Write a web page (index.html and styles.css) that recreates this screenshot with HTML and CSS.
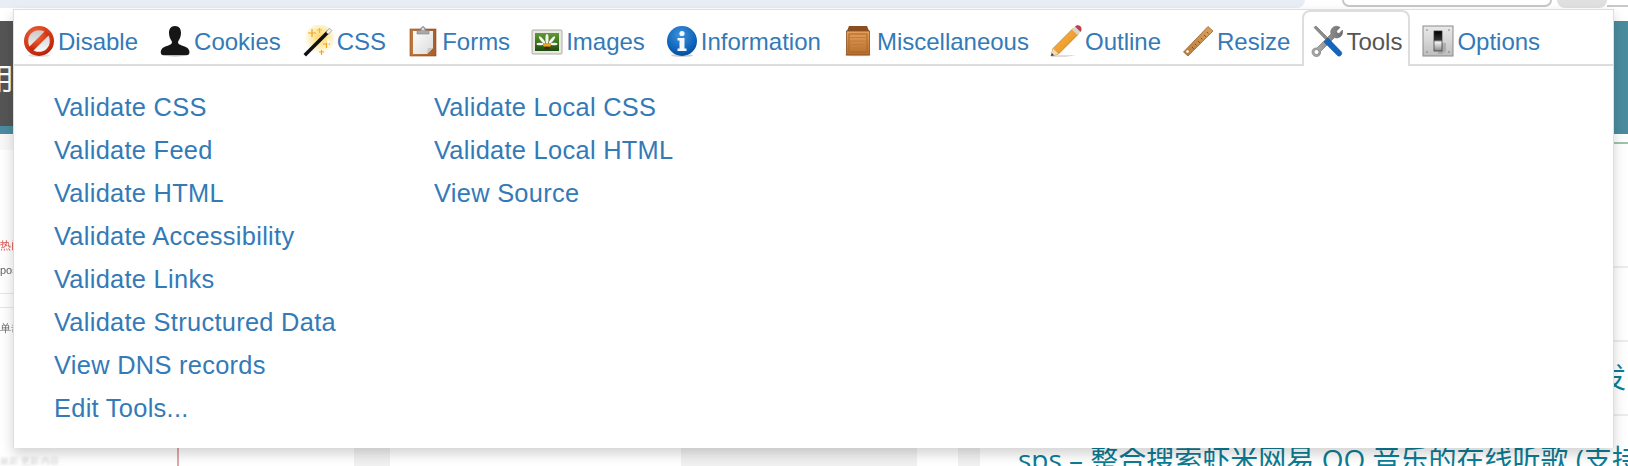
FILE: index.html
```html
<!DOCTYPE html>
<html lang="en">
<head>
<meta charset="utf-8">
<title>Web Developer</title>
<link rel="stylesheet" href="styles.css">
</head>
<body>
<div class="page">
  <div class="browser-bar">
    <div class="bar-fill"></div>
    <div class="search-pill"></div>
    <div class="avatar-circle"></div>
    <div class="bar-end"></div>
  </div>
  <div class="gap-white"></div>
  <div class="hero">
    <div class="hero-dark"><span class="hero-char">用</span></div>
    <div class="hero-teal"></div>
  </div>
  <div class="stripe"></div>
  <div class="content">
    <div class="upper">
      <div class="side-left">
        <div class="shade-row"></div>
        <div class="tiny red">热门 &#160;&#160; 推荐</div>
        <div class="tiny grey">post</div>
        <div class="rule r1"></div>
        <div class="rule r2"></div>
        <div class="tiny grey t3">单击</div>
      </div>
      <div class="side-right">
        <div class="green-line"></div>
        <div class="rule-right rr1"></div>
        <div class="rule-right rr2"><span class="frag">发</span></div>
        <div class="rule-right rr3"></div>
      </div>
    </div>
    <div class="lower">
      <span class="blur-text">最新 更新 内容</span>
      <span class="red-line"></span>
      <span class="col c1"></span>
      <span class="col c2"></span>
      <span class="col c3"></span>
      <span class="sps">sps – 整合搜索虾米网易 QQ 音乐的在线听歌 (支持</span>
    </div>
  </div>

  <div class="menu">
    <nav class="tabs">
      <a class="tab">
        <svg class="ico" viewBox="0 0 32 32"><defs><radialGradient id="g1" cx=".4" cy=".3" r=".8"><stop offset="0" stop-color="#ee6a3c"/><stop offset=".7" stop-color="#cf2f10"/><stop offset="1" stop-color="#a01c06"/></radialGradient><linearGradient id="g1b" x1="0" y1="0" x2="0" y2="1"><stop offset="0" stop-color="#c9c9c9"/><stop offset="1" stop-color="#fafafa"/></linearGradient></defs><ellipse cx="16" cy="30.5" rx="11" ry="1.5" fill="#ddd"/><circle cx="16" cy="16" r="15" fill="url(#g1)"/><circle cx="16" cy="16" r="10.8" fill="url(#g1b)"/><path d="M5.5 22.5 22.5 5.5 26.5 9.500 9.500 26.500z" fill="url(#g1)"/></svg>
        <span class="lbl">Disable</span>
      </a>
      <a class="tab">
        <svg class="ico" viewBox="0 0 32 32"><ellipse cx="16" cy="30" rx="13" ry="1.4" fill="#bbb"/><path d="M16 1c4.300 0 6 3 6 7 0 3-1.200 6-2.600 8-.6 1-.4 2.500.6 3.300 3 1.700 9 2.300 10.200 6.200.8 2.500-.2 4.500-2 4.500H4c-1.800 0-2.800-2-2-4.500C3.200 21.600 9.200 21 12 19.300c1-.8 1.200-2.300.6-3.300C11.200 14 10 11 10 8c0-4 1.700-7 6-7z" fill="#161616"/></svg>
        <span class="lbl">Cookies</span>
      </a>
      <a class="tab">
        <svg class="ico" viewBox="0 0 32 32"><defs><radialGradient id="g3" cx=".55" cy=".45" r=".55"><stop offset="0" stop-color="#ffd766"/><stop offset=".6" stop-color="#fdeeb8"/><stop offset="1" stop-color="#fff"/></radialGradient></defs><circle cx="17" cy="14" r="15" fill="url(#g3)"/><path d="M6 8h8M10 4v8M21 19h7M24.500 16v7M17 27h5M19.500 25v5" stroke="#f4a41c" stroke-width="1.200"/><path d="M15 5h5M17.500 3v5" stroke="#f7b733" stroke-width="1.200"/><path d="M23 17h6M26 14v6" stroke="#fff" stroke-width="1.200"/><path d="M1.500 29 25 5.500l2.500 2.500L4 31.500z" fill="#111"/><path d="M24 7 27.500 3.200l2.300 2.300L26.300 9.300z" fill="#f2f2f2" stroke="#777" stroke-width=".6"/></svg>
        <span class="lbl">CSS</span>
      </a>
      <a class="tab">
        <svg class="ico" viewBox="0 0 32 32"><defs><linearGradient id="g4" x1="0" y1="0" x2="1" y2="0"><stop offset="0" stop-color="#c2773a"/><stop offset="1" stop-color="#a95f26"/></linearGradient><linearGradient id="g4b" x1="0" y1="0" x2="1" y2="1"><stop offset="0" stop-color="#fdfdfd"/><stop offset="1" stop-color="#dcdcdc"/></linearGradient></defs><rect x="3" y="4" width="26" height="27" fill="url(#g4)" stroke="#8a4a1c" stroke-width=".6"/><path d="M6 6h20v17l-6 6H6z" fill="url(#g4b)"/><path d="M20 29c0-3 1-6 1-6h5z" fill="#c9c9c9"/><path d="M10 9V5.500h3.500C13.500 3.500 14.500 1.500 16 1.500s2.500 2 2.500 4H22V9z" fill="#a9a9a9" stroke="#808080" stroke-width=".6"/><circle cx="16" cy="4" r="1" fill="#eee"/></svg>
        <span class="lbl">Forms</span>
      </a>
      <a class="tab">
        <svg class="ico" viewBox="0 0 32 32"><defs><linearGradient id="g5" x1="0" y1="0" x2="0" y2="1"><stop offset="0" stop-color="#5f9b30"/><stop offset="1" stop-color="#1f4a12"/></linearGradient></defs><rect x="1" y="5" width="30" height="24" rx="1" fill="#e8e8e0" stroke="#999" stroke-width=".8"/><rect x="4" y="8" width="24" height="18" fill="url(#g5)"/><g fill="#f4f4ec"><ellipse cx="16" cy="14" rx="1.600" ry="5"/><ellipse cx="11" cy="15" rx="1.400" ry="4.500" transform="rotate(-40 11 15)"/><ellipse cx="21" cy="15" rx="1.400" ry="4.500" transform="rotate(40 21 15)"/><ellipse cx="9" cy="19" rx="3.500" ry="1.300"/><ellipse cx="23" cy="19" rx="3.500" ry="1.300"/></g><ellipse cx="16" cy="20" rx="4" ry="2" fill="#eda51c"/><ellipse cx="16" cy="23" rx="3" ry="1.400" fill="#3a2a10"/></svg>
        <span class="lbl">Images</span>
      </a>
      <a class="tab">
        <svg class="ico" viewBox="0 0 32 32"><defs><radialGradient id="g6" cx=".45" cy=".3" r=".8"><stop offset="0" stop-color="#3f93dc"/><stop offset=".7" stop-color="#0a5fb4"/><stop offset="1" stop-color="#053f86"/></radialGradient></defs><ellipse cx="16" cy="30.500" rx="11" ry="1.500" fill="#ccc"/><circle cx="16" cy="16" r="15" fill="url(#g6)"/><circle cx="16" cy="8.500" r="2.600" fill="#f4f8fc"/><path d="M11.500 13H18.500V23.500H20.500V26H11.500V23.500H13.500V15.500H11.500z" fill="#f4f8fc"/></svg>
        <span class="lbl">Information</span>
      </a>
      <a class="tab">
        <svg class="ico" viewBox="0 0 32 32"><defs><linearGradient id="g7" x1="0" y1="0" x2="0" y2="1"><stop offset="0" stop-color="#e5a25c"/><stop offset="1" stop-color="#b76c2a"/></linearGradient></defs><ellipse cx="16" cy="30" rx="13" ry="1.300" fill="#ccc"/><path d="M7 1h18l2.500 6H4.500z" fill="#8a4f20"/><rect x="4.500" y="6" width="23" height="24" fill="url(#g7)" stroke="#8a4f20" stroke-width=".8"/><rect x="7" y="9" width="18" height="18" fill="none" stroke="#a9652a" stroke-width="1"/><path d="M7 12.500h18M7 16h18M7 19.500h18M7 23h18" stroke="#bd7a39" stroke-width=".9"/></svg>
        <span class="lbl">Miscellaneous</span>
      </a>
      <a class="tab">
        <svg class="ico" viewBox="0 0 32 32"><defs><linearGradient id="g8" x1="0" y1="0" x2="1" y2="1"><stop offset="0" stop-color="#f9bd4c"/><stop offset="1" stop-color="#e6871a"/></linearGradient></defs><path d="M2 30h24l-10 2H2z" fill="#ddd"/><path d="M1 31 3 23.500 23 3.500 28.500 9 8.500 29z" fill="url(#g8)" stroke="#a8640f" stroke-width=".6"/><path d="M1 31 3 23.500 8.500 29z" fill="#efdcbc"/><path d="M1 31 1.800 28 4 30.200z" fill="#333"/><path d="M22 4.500 25 1.500 30.500 7 27.500 10z" fill="#d5d5d5"/><path d="M25 1.500C26.500-.2 29-.2 30.400 1.200S32 5.300 30.500 7z" fill="#c33a48"/></svg>
        <span class="lbl">Outline</span>
      </a>
      <a class="tab">
        <svg class="ico" viewBox="0 0 32 32"><defs><linearGradient id="g9" x1="0" y1="1" x2="1" y2="0"><stop offset="0" stop-color="#b87a3a"/><stop offset="1" stop-color="#dca25e"/></linearGradient></defs><path d="M6 31 1.500 27 26 1.500 31 6z" fill="url(#g9)" stroke="#8a5a24" stroke-width=".7"/><circle cx="5.500" cy="26.500" r="1.300" fill="#fff"/><path d="M10 22l2 2M13 19l1.500 1.500M16 16l2 2M19 13l1.500 1.500M22 10l2 2M25 7l1.500 1.500" stroke="#70471a" stroke-width=".8"/></svg>
        <span class="lbl">Resize</span>
      </a>
      <a class="tab active">
        <svg class="ico" viewBox="0 0 32 32"><defs><linearGradient id="g10" x1="0" y1="0" x2="1" y2="0"><stop offset="0" stop-color="#b5b5b5"/><stop offset="1" stop-color="#6f6f6f"/></linearGradient></defs><path d="M3 2.500 5 1l13 13-2 2z" fill="#8d8d8d" stroke="#555" stroke-width=".5"/><path d="M29 2.500 25.500 6l.5 2 2 .5 3.500-3.500c.6 3-.4 6-3.500 7.500-2 .8-3.500.3-4.500 0L9.500 26.500c.5 2.500-1 5-4 5-2.500 0-4.500-2-4.500-4.500 0-3 2.500-4.500 5-4L20 9c-.5-1.500-.5-3.500.6-5C22.500 1 26 .3 29 2.500zM5.500 24.500A2.500 2.500 0 1 0 5.500 29.500 2.500 2.500 0 1 0 5.500 24.500z" fill="url(#g10)" fill-rule="evenodd" stroke="#555" stroke-width=".5"/><path d="M13 17l4-4L30 26.500c1.200 1.300 1 2.800 0 3.800s-2.500 1.200-3.800 0z" fill="#1565c0" stroke="#0d4a94" stroke-width=".5"/></svg>
        <span class="lbl">Tools</span>
      </a>
      <a class="tab">
        <svg class="ico" viewBox="0 0 32 32"><defs><linearGradient id="g11" x1="0" y1="0" x2="0" y2="1"><stop offset="0" stop-color="#e9e9e9"/><stop offset=".5" stop-color="#d6d6d6"/><stop offset="1" stop-color="#bdbdbd"/></linearGradient><linearGradient id="g11b" x1="0" y1="0" x2="0" y2="1"><stop offset="0" stop-color="#000"/><stop offset=".45" stop-color="#333"/><stop offset=".55" stop-color="#f4f4f4"/><stop offset="1" stop-color="#888"/></linearGradient></defs><rect x="1" y="1" width="30" height="30" fill="url(#g11)" stroke="#8a8a8a"/><g fill="#777"><circle cx="5" cy="5" r=".8"/><circle cx="27" cy="5" r=".8"/><circle cx="5" cy="27" r=".8"/><circle cx="27" cy="27" r=".8"/></g><path d="M18 18h6v8l-4 3h-4z" fill="#999" opacity=".6"/><rect x="12" y="6" width="8" height="20" fill="url(#g11b)" stroke="#333" stroke-width=".7"/></svg>
        <span class="lbl">Options</span>
      </a>
    </nav>
    <div class="panel">
      <ul class="links links-a">
        <li><a>Validate CSS</a></li>
        <li><a>Validate Feed</a></li>
        <li><a>Validate HTML</a></li>
        <li><a>Validate Accessibility</a></li>
        <li><a>Validate Links</a></li>
        <li><a>Validate Structured Data</a></li>
        <li><a>View DNS records</a></li>
        <li><a>Edit Tools...</a></li>
      </ul>
      <ul class="links">
        <li><a>Validate Local CSS</a></li>
        <li><a>Validate Local HTML</a></li>
        <li><a>View Source</a></li>
      </ul>
    </div>
  </div>
</div>
</body>
</html>
```
FILE: styles.css
```css
* { box-sizing: border-box; }
html, body { margin: 0; padding: 0; }
body { background: #fff; font-family: "Liberation Sans", Arial, sans-serif; }
.page { position: relative; width: 1628px; height: 466px; overflow: hidden; display: flex; flex-direction: column; }

.browser-bar { height: 8px; display: flex; flex: none; }
.bar-fill { width: 1305px; background: #e9edf6; border-radius: 0 0 14px 0; }
.search-pill { width: 210px; height: 7px; margin-left: 37px; background: #fff; border: 2px solid #c8c8c8; border-top: 0; border-radius: 0 0 18px 18px; }
.avatar-circle { width: 50px; height: 8px; background: #e0e0e0; margin-left: 5px; border-radius: 0 0 25px 25px; }
.bar-end { flex: 1; height: 7px; border-bottom: 2px solid #c8c8c8; }
.gap-white { height: 13px; flex: none; }

.hero { height: 105px; flex: none; display: flex; }
.hero-dark { width: 300px; background: #555; color: #fff; font: 30px "Noto Sans CJK SC", sans-serif; line-height: 1; padding-top: 40px; }
.hero-char { display: block; margin-left: -16px; }
.hero-teal { flex: 1; background: #4b8c9f; }
.stripe { height: 8px; flex: none; background: #4b8c9f; }

.content { flex: 1; display: flex; flex-direction: column; min-height: 0; }
.upper { height: 314px; flex: none; display: flex; justify-content: space-between; }
.side-left { width: 300px; }
.shade-row { height: 16px; background: #f8f8f8; }
.tiny { font-size: 11px; line-height: 14px; filter: blur(.6px); white-space: nowrap; }
.red { color: #d9534f; margin-top: 88px; }
.grey { color: #666; margin-top: 11px; }
.rule { height: 1px; background: #e6e6e6; }
.r1 { margin-top: 16px; }
.r2 { margin-top: 13px; }
.t3 { margin-top: 13px; }

.side-right { width: 40px; }
.green-line { height: 2px; margin-top: 8px; background: #9cc4ac; }
.rule-right { height: 2px; background: #ededed; position: relative; }
.rr1 { margin-top: 122px; }
.rr2 { margin-top: 72px; }
.rr3 { margin-top: 72px; }
.frag { display: block; position: absolute; left: 10px; top: 18px; color: #0c7c94; font: 28px/36px "Noto Sans CJK SC", sans-serif; }

.lower { flex: 1; display: flex; align-items: stretch; min-height: 0; }
.blur-text { width: 120px; font-size: 9px; line-height: 26px; color: #d4d4d4; filter: blur(.8px); flex: none; }
.red-line { width: 2px; background: #e0a9a9; margin-left: 57px; flex: none; }
.col { background: #f1f1f1; flex: none; }
.c1 { width: 36px; margin-left: 175px; }
.c2 { width: 236px; margin-left: 291px; }
.c3 { width: 22px; margin-left: 41px; }
.sps { margin-left: 38px; color: #0c7c94; font: 28px/18px "Open Sans", "Noto Sans CJK SC", sans-serif; white-space: nowrap; padding-top: 2px; }

.menu { position: absolute; left: 13px; top: 9px; width: 1601px; height: 439px; background: #fff; border: 1px solid #dedede; border-bottom: 0; box-shadow: 0 6px 12px rgba(0, 0, 0, .175); }
.tabs { display: flex; height: 56px; border-bottom: 2px solid #ddd; }
.tab { display: flex; align-items: center; height: 56px; padding: 0 8px 0 7px; margin-right: 2px; border: 2px solid transparent; border-bottom: 0; border-radius: 8px 8px 0 0; color: #337ab7; font-size: 24px; }
.tab.active { color: #555; background: #fff; border-color: #ddd; position: relative; z-index: 1; padding-right: 6px; margin-right: 3px; }
.ico { width: 32px; height: 32px; flex: none; margin-right: 3px; margin-top: 3px; }
.lbl { margin-top: 6px; }

.panel { display: flex; padding: 20px 0 0 40px; }
.links { list-style: none; margin: 0; padding: 0; color: #337ab7; font-size: 25.4px; line-height: 43px; letter-spacing: .3px; }
.links-a { width: 380px; }
```
